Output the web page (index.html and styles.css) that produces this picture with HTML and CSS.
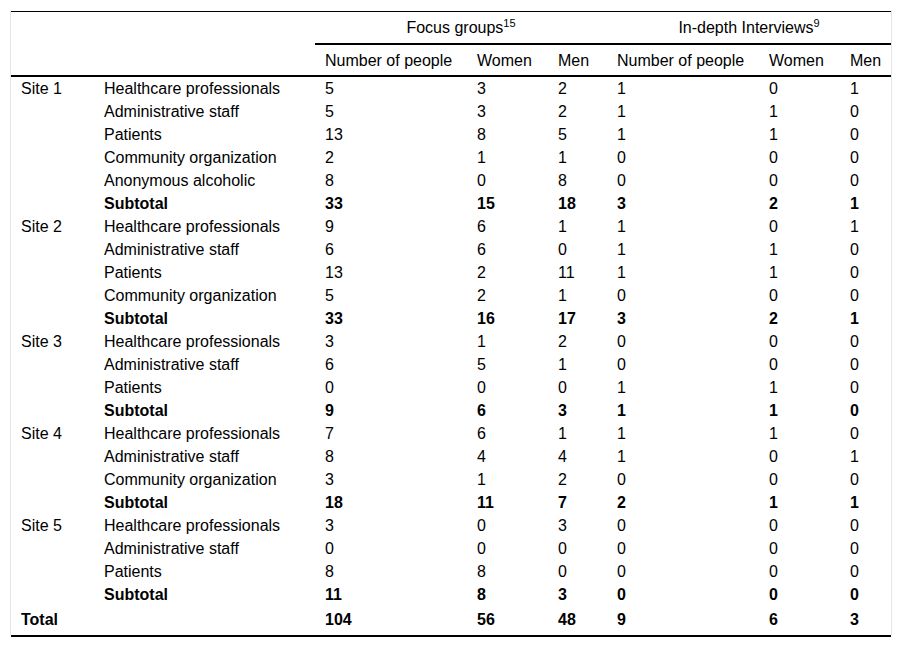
FILE: index.html
```html
<!DOCTYPE html>
<html lang="en">
<head>
<meta charset="utf-8">
<title>Participants table</title>
<link rel="stylesheet" href="styles.css">
</head>
<body>
<div class="frame">
<table class="data">
  <colgroup>
    <col class="c-site"><col class="c-cat"><col class="c-num"><col class="c-w"><col class="c-m"><col class="c-num"><col class="c-w"><col class="c-m2">
  </colgroup>
  <thead>
    <tr class="head1">
      <th colspan="2"></th>
      <th colspan="3" class="span">Focus groups<sup>15</sup></th>
      <th colspan="3" class="span">In-depth Interviews<sup>9</sup></th>
    </tr>
    <tr class="head2">
      <th></th><th></th>
      <th>Number of people</th><th>Women</th><th>Men</th>
      <th>Number of people</th><th>Women</th><th>Men</th>
    </tr>
  </thead>
  <tbody>
    <tr><td>Site 1</td><td>Healthcare professionals</td><td>5</td><td>3</td><td>2</td><td>1</td><td>0</td><td>1</td></tr>
    <tr><td></td><td>Administrative staff</td><td>5</td><td>3</td><td>2</td><td>1</td><td>1</td><td>0</td></tr>
    <tr><td></td><td>Patients</td><td>13</td><td>8</td><td>5</td><td>1</td><td>1</td><td>0</td></tr>
    <tr><td></td><td>Community organization</td><td>2</td><td>1</td><td>1</td><td>0</td><td>0</td><td>0</td></tr>
    <tr><td></td><td>Anonymous alcoholic</td><td>8</td><td>0</td><td>8</td><td>0</td><td>0</td><td>0</td></tr>
    <tr class="sub"><td></td><td>Subtotal</td><td>33</td><td>15</td><td>18</td><td>3</td><td>2</td><td>1</td></tr>
    <tr><td>Site 2</td><td>Healthcare professionals</td><td>9</td><td>6</td><td>1</td><td>1</td><td>0</td><td>1</td></tr>
    <tr><td></td><td>Administrative staff</td><td>6</td><td>6</td><td>0</td><td>1</td><td>1</td><td>0</td></tr>
    <tr><td></td><td>Patients</td><td>13</td><td>2</td><td>11</td><td>1</td><td>1</td><td>0</td></tr>
    <tr><td></td><td>Community organization</td><td>5</td><td>2</td><td>1</td><td>0</td><td>0</td><td>0</td></tr>
    <tr class="sub"><td></td><td>Subtotal</td><td>33</td><td>16</td><td>17</td><td>3</td><td>2</td><td>1</td></tr>
    <tr><td>Site 3</td><td>Healthcare professionals</td><td>3</td><td>1</td><td>2</td><td>0</td><td>0</td><td>0</td></tr>
    <tr><td></td><td>Administrative staff</td><td>6</td><td>5</td><td>1</td><td>0</td><td>0</td><td>0</td></tr>
    <tr><td></td><td>Patients</td><td>0</td><td>0</td><td>0</td><td>1</td><td>1</td><td>0</td></tr>
    <tr class="sub"><td></td><td>Subtotal</td><td>9</td><td>6</td><td>3</td><td>1</td><td>1</td><td>0</td></tr>
    <tr><td>Site 4</td><td>Healthcare professionals</td><td>7</td><td>6</td><td>1</td><td>1</td><td>1</td><td>0</td></tr>
    <tr><td></td><td>Administrative staff</td><td>8</td><td>4</td><td>4</td><td>1</td><td>0</td><td>1</td></tr>
    <tr><td></td><td>Community organization</td><td>3</td><td>1</td><td>2</td><td>0</td><td>0</td><td>0</td></tr>
    <tr class="sub"><td></td><td>Subtotal</td><td>18</td><td>11</td><td>7</td><td>2</td><td>1</td><td>1</td></tr>
    <tr><td>Site 5</td><td>Healthcare professionals</td><td>3</td><td>0</td><td>3</td><td>0</td><td>0</td><td>0</td></tr>
    <tr><td></td><td>Administrative staff</td><td>0</td><td>0</td><td>0</td><td>0</td><td>0</td><td>0</td></tr>
    <tr><td></td><td>Patients</td><td>8</td><td>8</td><td>0</td><td>0</td><td>0</td><td>0</td></tr>
    <tr class="sub"><td></td><td>Subtotal</td><td>11</td><td>8</td><td>3</td><td>0</td><td>0</td><td>0</td></tr>
    <tr class="total"><td>Total</td><td></td><td>104</td><td>56</td><td>48</td><td>9</td><td>6</td><td>3</td></tr>
  </tbody>
</table>
</div>
<div class="rule"></div>
</body>
</html>
```
FILE: styles.css
```css
html, body {
  margin: 0;
  padding: 0;
  background: #fff;
}
body {
  font-family: "Liberation Sans", Arial, sans-serif;
  font-size: 16px;
  color: #000;
}
.frame {
  margin: 10px 10px 0 10px;
  padding-top: 1px;
  border-left: 1px solid #e6e6e6;
  border-right: 1px solid #e6e6e6;
  width: 880px;
}
.data {
  width: 880px;
  table-layout: fixed;
  border-collapse: separate;
  border-spacing: 0;
  border-top: 1px solid #000;
}
.c-site { width: 83px; }
.c-cat { width: 221px; }
.c-num { width: 152px; }
.c-w { width: 81px; }
.c-m { width: 59px; }
.c-m2 { width: 51px; }
.data th, .data td {
  padding: 2px 0 2px 10px;
  line-height: 19px;
  text-align: left;
  font-weight: normal;
  white-space: nowrap;
  vertical-align: middle;
}
.head1 th {
  padding-top: 6px;
  padding-bottom: 6px;
}
.head1 th.span {
  text-align: center;
  padding-left: 0;
  border-bottom: 2px solid #000;
}
.head2 th {
  padding-top: 6px;
  padding-bottom: 5px;
  border-bottom: 2px solid #000;
}
sup {
  font-size: 11px;
  line-height: 0;
  vertical-align: 6px;
}
.sub td, .total td {
  font-weight: bold;
}
.total td {
  padding-top: 4px;
  padding-bottom: 6px;
}
.rule {
  margin: 0 0 0 11px;
  width: 880px;
  border-top: 2px solid #000;
}
```
